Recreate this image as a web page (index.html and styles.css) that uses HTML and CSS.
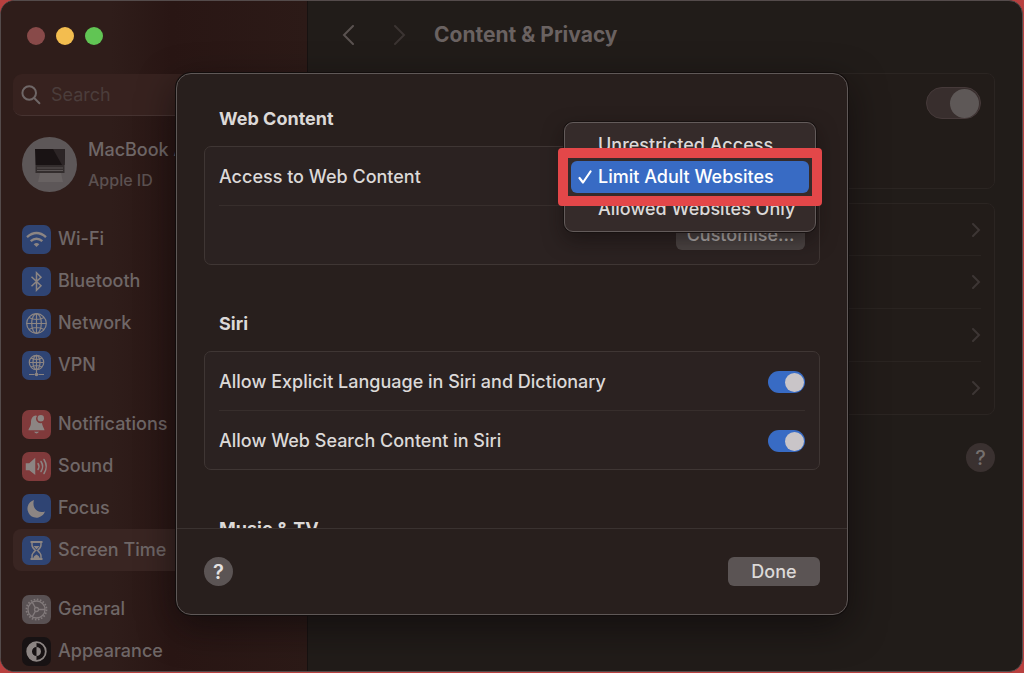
FILE: index.html
```html
<!DOCTYPE html>
<html lang="en">
<head>
<meta charset="utf-8">
<meta name="viewport" content="width=device-width, initial-scale=1">
<title>Content &amp; Privacy</title>
<link rel="stylesheet" href="styles.css">
</head>
<body>
<div class="window">
  <aside class="sidebar">
    <div class="lights">
      <button class="light light-close" aria-label="Close"></button>
      <button class="light light-min" aria-label="Minimise"></button>
      <button class="light light-max" aria-label="Zoom"></button>
    </div>
    <label class="search">
      <svg class="search-icon" viewBox="0 0 20 20" fill="none" stroke="currentColor" stroke-width="2" stroke-linecap="round"><circle cx="8.2" cy="8" r="6.8"/><path d="M13.2 13 18.4 18.2"/></svg>
      <input class="search-input" type="text" placeholder="Search" aria-label="Search">
    </label>
    <a class="account" href="#">
      <svg class="avatar" viewBox="0 0 55 55"><circle cx="27.500" cy="27.500" r="27.500" fill="#5d5758"/><path d="M18 36H39L41 45H16Z" fill="#686262"/><path d="M13 12H43L42.500 28H13.500Z" fill="#191314"/><path d="M31 12H43L42.500 28H40Z" fill="#2c2526"/><path d="M13.500 28H42.500V36H13.500Z" fill="#332d2d"/><path d="M15 31H41M15 33.500H41" stroke="#5b5555" stroke-width="1"/></svg>
      <span class="account-text"><span class="account-name">MacBook Air</span><span class="account-sub">Apple ID</span></span>
    </a>
    <nav class="nav">
      <div class="group">
        <a class="item" href="#"><svg class="icon blue" viewBox="0 0 29 29" fill="none" stroke="currentColor" stroke-width="2.400"><path d="M5 12.200Q14.500 4 24 12.200M8.700 16.200Q14.500 11.300 20.300 16.200"/><path d="M11.700 19.200Q14.500 16.800 17.300 19.200L14.500 22Z" fill="currentColor" stroke="none"/></svg>Wi-Fi</a>
        <a class="item" href="#"><svg class="icon blue" viewBox="0 0 29 29" fill="none" stroke="currentColor" stroke-width="1.500"><path d="M9.500 9.800 19 18.800 14.500 23.200V5.800L19 10.200 9.500 19.200"/></svg>Bluetooth</a>
        <a class="item" href="#"><svg class="icon blue" viewBox="0 0 29 29" fill="none" stroke="currentColor" stroke-width="1.200"><circle cx="14.500" cy="14.500" r="9.800"/><ellipse cx="14.500" cy="14.500" rx="4.800" ry="9.800"/><path d="M14.500 4.700V24.300M4.700 14.500H24.300M6.800 8.500Q14.500 12.500 22.200 8.500M6.800 20.500Q14.500 16.500 22.200 20.500"/></svg>Network</a>
        <a class="item" href="#"><svg class="icon blue" viewBox="0 0 29 29" fill="none" stroke="currentColor" stroke-width="1.200"><circle cx="14.500" cy="11.500" r="7.200"/><ellipse cx="14.500" cy="11.500" rx="3.500" ry="7.200"/><path d="M14.500 4.300V22M7.300 11.500H21.700M9 7Q14.500 10 20 7M9 16Q14.500 13 20 16M7 23.500H12.500M16.500 23.500H22"/><circle cx="14.500" cy="23.500" r="1.800" fill="currentColor" stroke="none"/></svg>VPN</a>
      </div>
      <div class="group">
        <a class="item" href="#"><svg class="icon red" viewBox="0 0 29 29" fill="currentColor"><path d="M14 5.500C10 6 9 9 9 12.500 9 17 6.500 18 6.500 20.300H22.500C22.500 18.500 20.500 17 20 13A4.500 4.500 0 0 1 15 6Z"/><circle cx="18.800" cy="8.300" r="3.200"/><path d="M12 21.800H17Q14.500 25 12 21.800Z"/></svg>Notifications</a>
        <a class="item" href="#"><svg class="icon red" viewBox="0 0 29 29" fill="none" stroke="currentColor" stroke-width="1.500" stroke-linecap="round"><path d="M4.500 12H7.500L12.500 7.500V21.500L7.500 17.500H4.500Z" fill="currentColor"/><path d="M16 11.500Q18 14.500 16 17.500M19 9.500Q22.300 14.500 19 19.500M22 7.500Q26.500 14.500 22 21.500"/></svg>Sound</a>
        <a class="item" href="#"><svg class="icon blue" viewBox="0 0 29 29" fill="currentColor"><path d="M12 6A9 9 0 1 0 23 17.500C16 20 9.500 14 12 6Z"/></svg>Focus</a>
        <a class="item selected" href="#"><svg class="icon blue" viewBox="0 0 29 29" fill="none" stroke="currentColor" stroke-width="1.500"><path d="M8.500 6H20.500M8.500 23H20.500" stroke-width="2"/><path d="M10 6.500V9Q10 11.500 13.500 14.500 10 17.500 10 20V22.500M19 6.500V9Q19 11.500 15.500 14.500 19 17.500 19 20V22.500"/><path d="M11.500 10H17.500L14.500 13.500ZM11 22.500Q11.500 20 14.500 18.500 17.500 20 18 22.500Z" fill="currentColor" stroke="none"/></svg>Screen Time</a>
      </div>
      <div class="group">
        <a class="item" href="#"><svg class="icon grey" viewBox="0 0 29 29" fill="none" stroke="currentColor" stroke-width="1.300"><circle cx="14.500" cy="14.500" r="10" stroke-width="1.800" stroke-dasharray="1.600 1.541"/><circle cx="14.500" cy="14.500" r="8.500"/><circle cx="14.500" cy="14.500" r="2"/><path d="M16.500 14.500H23M13.500 12.800 10.200 7.200M13.500 16.200 10.200 21.800"/></svg>General</a>
        <a class="item" href="#"><svg class="icon black" viewBox="0 0 29 29" fill="none" stroke="currentColor" stroke-width="1.800"><circle cx="14.500" cy="14.500" r="9.300"/><path d="M14.500 5.200A9.300 9.300 0 0 0 14.500 23.800V19A4.500 4.500 0 0 1 14.500 10Z" fill="currentColor" stroke="none"/><path d="M14.500 10A4.500 4.500 0 0 1 14.500 19Z" fill="currentColor" stroke="none"/></svg>Appearance</a>
      </div>
    </nav>
  </aside>

  <main class="main">
    <header class="toolbar">
      <button class="arrow" aria-label="Back"><svg viewBox="0 0 12 20" fill="none" stroke="currentColor" stroke-width="2" stroke-linecap="round"><path d="M11 1 2 10 11 19"/></svg></button>
      <button class="arrow arrow-off" aria-label="Forward" disabled><svg viewBox="0 0 12 20" fill="none" stroke="currentColor" stroke-width="2" stroke-linecap="round"><path d="M1 1 10 10 1 19"/></svg></button>
      <h1 class="title">Content &amp; Privacy</h1>
    </header>
    <section class="panel panel-top"><input class="switch switch-large" type="checkbox" checked aria-label="Content and privacy restrictions"></section>
    <section class="panel">
      <a class="link-row" href="#" aria-label="Content restrictions"><svg class="chevron" viewBox="0 0 9 14"><path d="M1 1 7 7 1 13"/></svg></a>
      <a class="link-row" href="#" aria-label="Store restrictions"><svg class="chevron" viewBox="0 0 9 14"><path d="M1 1 7 7 1 13"/></svg></a>
      <a class="link-row" href="#" aria-label="App restrictions"><svg class="chevron" viewBox="0 0 9 14"><path d="M1 1 7 7 1 13"/></svg></a>
      <a class="link-row" href="#" aria-label="Preference restrictions"><svg class="chevron" viewBox="0 0 9 14"><path d="M1 1 7 7 1 13"/></svg></a>
    </section>
    <div class="help-line"><button class="help help-dim">?</button></div>
  </main>
</div>

<div class="overlay">
  <div class="dialog" role="dialog" aria-label="Content restrictions">
    <div class="dialog-body">
      <h2 class="heading">Web Content</h2>
      <div class="card">
        <div class="row">
          <span>Access to Web Content</span>
          <div class="menu" role="group" aria-label="Access to Web Content">
            <button class="option">Unrestricted Access</button>
            <button class="option option-on"><svg class="check" viewBox="0 0 14 14" fill="none" stroke="currentColor" stroke-width="2.200" stroke-linecap="round" stroke-linejoin="round"><path d="M1.500 8 5 12.500 12.500 1.500"/></svg>Limit Adult Websites</button>
            <button class="option">Allowed Websites Only</button>
            <div class="marker"></div>
          </div>
        </div>
        <div class="row row-end"><button class="button button-wide">Customise...</button></div>
      </div>
      <h2 class="heading">Siri</h2>
      <div class="card">
        <div class="row"><label for="explicit">Allow Explicit Language in Siri and Dictionary</label><input class="switch" id="explicit" type="checkbox" checked></div>
        <div class="row"><label for="websearch">Allow Web Search Content in Siri</label><input class="switch" id="websearch" type="checkbox" checked></div>
      </div>
      <h2 class="heading">Music &amp; TV</h2>
    </div>
    <footer class="dialog-foot">
      <button class="help">?</button>
      <button class="button">Done</button>
    </footer>
  </div>
</div>
</body>
</html>
```
FILE: styles.css
```css
* { box-sizing: border-box; }
body {
  margin: 0;
  height: 100vh;
  overflow: hidden;
  background: #b8403f;
  color: #dcd9d8;
  font-family: Inter, "Liberation Sans", sans-serif;
  font-size: 18px;
  font-weight: 500;
  line-height: 24px;
}
button, input { font: inherit; color: inherit; margin: 0; padding: 0; border: 0; background: none; }
a { color: inherit; text-decoration: none; }
h1, h2 { margin: 0; }

.window {
  display: flex;
  height: calc(100vh - 1px);
  margin-right: 1px;
  border: 1px solid #544b4b;
  border-radius: 14px;
  overflow: hidden;
  background: #211c19;
}

.sidebar {
  flex: none;
  width: 307px;
  padding: 26px 12px 0;
  border-right: 1px solid #171211;
  background: linear-gradient(90deg, #2f1d1a 0, #2f1d1a 110px, #291614 170px, #2c1a17);
  color: #6f6767;
}
.lights { display: flex; gap: 11px; padding-left: 14px; }
.light { width: 18px; height: 18px; border-radius: 50%; }
.light-close { background: #884a49; }
.light-min { background: #f3bd4f; }
.light-max { background: #61c554; }

.search {
  display: flex;
  align-items: center;
  gap: 10px;
  height: 42px;
  margin-top: 29px;
  padding: 0 8px;
  border-radius: 9px;
  border-bottom: 1px solid #463331;
  background: #37221f;
}
.search-icon { flex: none; width: 20px; height: 20px; }
.search-input { flex: 1; min-width: 0; font-weight: 400; }
.search-input::placeholder { color: #4b3d3b; opacity: 1; }

.account { display: flex; align-items: center; gap: 11px; margin-top: 20px; padding-left: 9px; }
.avatar { flex: none; width: 55px; height: 55px; }
.account-text { display: flex; flex-direction: column; gap: 6px; padding-top: 2px; }
.account-sub { font-size: 16px; color: #5c5151; }

.nav { display: flex; flex-direction: column; gap: 17px; margin-top: 26px; }
.item {
  display: flex;
  align-items: center;
  gap: 7px;
  height: 42px;
  padding-left: 9px;
  border-radius: 8px;
}
.selected { background: #392522; }
.icon { width: 29px; height: 29px; border-radius: 7px; color: #8c8583; }
.blue { background: #2f4473; }
.red { background: #803a3b; }
.grey { background: #595153; color: #827a7b; }
.black { background: #171213; }

.main { flex: 1; min-width: 0; padding: 0 27px; }
.toolbar { display: flex; align-items: center; height: 72px; padding: 0 7px 4px; }
.arrow { display: flex; width: 12px; height: 20px; margin-right: 40px; color: #5a5250; }
.arrow + .arrow { margin-right: 28px; }
.arrow-off { color: #3b3432; }
.title { font-size: 21px; line-height: 28px; font-weight: 700; color: #6a6261; }

.panel {
  margin-bottom: 14px;
  border: 1px solid #2b2522;
  border-radius: 8px;
  background: #221c19;
  padding: 0 13px;
}
.panel-top { display: flex; justify-content: flex-end; height: 116px; padding-top: 13px; }
.link-row { display: flex; align-items: center; justify-content: flex-end; height: 51px; }
.link-row + .link-row { height: 53px; border-top: 1px solid #2a2421; }
.chevron { width: 9px; height: 14px; fill: none; stroke: #3d3634; stroke-width: 2; stroke-linecap: round; }
.help-line { display: flex; justify-content: flex-end; margin-top: 28px; }

.help {
  width: 29px;
  height: 29px;
  border-radius: 50%;
  background: #5b5454;
  font-size: 20px;
  font-weight: 600;
  color: #e4e1e0;
}
.help-dim { background: #3a3130; color: #75706e; font-weight: 500; }

.switch {
  appearance: none;
  flex: none;
  display: flex;
  align-items: center;
  justify-content: flex-end;
  width: 37px;
  height: 22px;
  padding: 1px;
  border-radius: 16px;
  background: #386bc4;
}
.switch::before { content: ""; width: 19px; height: 19px; border-radius: 50%; background: #c9c5c8; }
.switch-large { width: 55px; height: 32px; border: 1px solid #463a3a; background: #382e2d; }
.switch-large::before { width: 29px; height: 29px; background: #5e5857; }

.overlay { position: absolute; inset: 0; display: flex; justify-content: center; padding: 73px 24px 0; }
.dialog {
  display: flex;
  flex-direction: column;
  width: 672px;
  height: calc(100vh - 131px);
  border: 1px solid #5f5857;
  border-radius: 15px;
  background: #281f1d;
  box-shadow: 0 0 0 1px #120d0c, 0 12px 36px rgba(10, 7, 8, 0.6);
  overflow: hidden;
}
.dialog-body { flex: 1; min-height: 0; padding: 33px 27px 0; overflow: hidden; }
.heading { padding-left: 15px; font-size: 18px; line-height: 24px; font-weight: 700; }
.card {
  margin: 15px 0 47px;
  padding: 0 14px;
  border: 1px solid #3f3634;
  border-radius: 7px;
  background: #2b2221;
}
.row {
  position: relative;
  display: flex;
  align-items: center;
  justify-content: space-between;
  height: 58px;
  padding-top: 2px;
}
.row + .row { height: 59px; border-top: 1px solid #372e2c; }
.row-end { justify-content: flex-end; padding-top: 0; }

.button {
  width: 92px;
  height: 29px;
  border-radius: 6px;
  background: #5b5454;
}
.button-wide { width: 129px; color: #b9b4b3; background: #4b4443; }

.menu {
  position: absolute;
  z-index: 2;
  top: -25px;
  right: -11px;
  width: 252px;
  padding: 6px;
  border: 1px solid #635b5a;
  border-radius: 9px;
  background: #352b2a;
  box-shadow: 0 0 0 1px #181211, 0 8px 20px rgba(15, 10, 10, 0.5);
}
.option { display: flex; align-items: center; width: 100%; height: 32px; padding-left: 27px; border-radius: 6px; }
.option-on { gap: 6px; padding-left: 7px; background: #386bc4; color: #fff; }
.check { width: 14px; height: 14px; }
.marker {
  position: absolute;
  inset: 25px -7px;
  border: 10px solid #e34749;
  border-radius: 4px;
  pointer-events: none;
}

.dialog-foot {
  display: flex;
  align-items: center;
  justify-content: space-between;
  height: 86px;
  padding: 0 27px;
  border-top: 1px solid #3a3230;
}
```
